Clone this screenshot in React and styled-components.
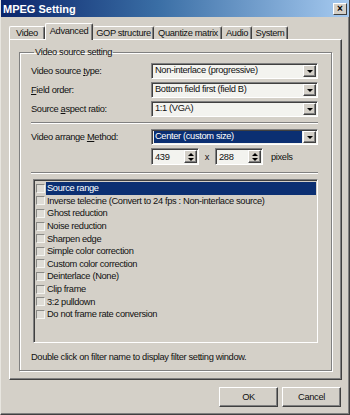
import styled, { createGlobalStyle } from "styled-components";

const GlobalStyle = createGlobalStyle`
  html, body {
    margin: 0;
    padding: 0;
    background: #d4d0c8;
  }
  body {
    font-family: "Liberation Sans", Arial, sans-serif;
  }
`;

const Window = styled.div`
  width: 350px;
  height: 415px;
  box-sizing: border-box;
  background: #d4d0c8;
  border-left: 1px solid #e8e6e0;
  border-right: 1px solid #404040;
  border-bottom: 1px solid #404040;
  box-shadow: inset -1px -1px #808080;
  display: flex;
  flex-direction: column;
  font-size: 9.3px;
  letter-spacing: -0.35px;
  color: #111;
`;

const TitleBar = styled.div`
  height: 17px;
  flex-shrink: 0;
  display: flex;
  align-items: center;
  justify-content: space-between;
  padding: 0 2px 0 2px;
  background: linear-gradient(to right, #0a246a, #3a6ea5 45%, #a6caf0);
  color: #fff;
  font-weight: bold;
  font-size: 11px;
  letter-spacing: 0;
`;

const CloseButton = styled.div`
  width: 14px;
  height: 12px;
  box-sizing: border-box;
  background: #d4d0c8;
  border-top: 1px solid #fff;
  border-left: 1px solid #fff;
  border-right: 1px solid #404040;
  border-bottom: 1px solid #404040;
  color: #000;
  font-size: 10px;
  line-height: 10px;
  text-align: center;
  font-weight: bold;
`;

const Body = styled.div`
  padding: 6px 0 0 8px;
  display: flex;
  flex-direction: column;
`;

const TabStrip = styled.div`
  display: flex;
  align-items: flex-end;
  height: 16px;
  position: relative;
  z-index: 1;
`;

const Tab = styled.div`
  width: ${(p) => p.$w}px;
  height: ${(p) => (p.$active ? 17 : 13)}px;
  margin-bottom: ${(p) => (p.$active ? -1 : 0)}px;
  box-sizing: border-box;
  background: #d4d0c8;
  border-top: 1px solid #fff;
  border-left: 1px solid ${(p) => (p.$first || p.$active ? "#fff" : "transparent")};
  border-right: 1px solid #404040;
  box-shadow: inset -1px 0 #808080;
  border-radius: 2px 2px 0 0;
  display: flex;
  justify-content: center;
  align-items: ${(p) => (p.$active ? "flex-start" : "center")};
  padding-top: ${(p) => (p.$active ? 2 : 0)}px;
  white-space: nowrap;
`;

const Panel = styled.div`
  width: 333px;
  height: 341px;
  box-sizing: border-box;
  border-top: 1px solid #fff;
  border-left: 1px solid #fff;
  border-right: 1px solid #404040;
  border-bottom: 1px solid #404040;
  box-shadow: inset -1px -1px #808080;
  padding: 0 9px;
`;

const Group = styled.fieldset`
  margin: 7px 0 0 0;
  width: 313px;
  height: 324px;
  box-sizing: border-box;
  border: 1px solid #808080;
  box-shadow: 1px 1px 0 #fff, inset 1px 1px 0 #fff;
  padding: 5px 13px 0 11px;
  display: flex;
  flex-direction: column;
`;

const Legend = styled.legend`
  padding: 0 1px;
  margin-left: 3px;
  line-height: 11px;
`;

const Row = styled.div`
  display: flex;
  align-items: center;
  height: ${(p) => p.$h || 16}px;
  margin-top: ${(p) => p.$mt || 0}px;
`;

const Label = styled.div`
  width: 120px;
  flex-shrink: 0;
  white-space: nowrap;

  u {
    text-decoration: underline;
  }
`;

const Combo = styled.div`
  width: 167px;
  height: 16px;
  box-sizing: border-box;
  border-top: 1px solid #808080;
  border-left: 1px solid #808080;
  border-right: 1px solid #fff;
  border-bottom: 1px solid #fff;
  box-shadow: inset 1px 1px #404040;
  background: #f3f3ef;
  display: flex;
  padding: 2px 1px 1px 2px;
`;

const ComboText = styled.div`
  flex: 1;
  padding-left: 1px;
  line-height: 11px;
  white-space: nowrap;
  background: ${(p) => (p.$selected ? "#0b2f72" : "transparent")};
  color: ${(p) => (p.$selected ? "#fff" : "#111")};
  margin-right: 1px;
  margin-top: -1px;
`;

const ArrowButton = styled.div`
  width: 13px;
  margin-top: -1px;
  box-sizing: border-box;
  background: #d4d0c8;
  border-top: 1px solid #fff;
  border-left: 1px solid #fff;
  border-right: 1px solid #404040;
  border-bottom: 1px solid #404040;
  box-shadow: inset -1px -1px #808080;
  display: flex;
  flex-direction: column;
  align-items: center;
  justify-content: center;
  gap: 2px;
`;

const Triangle = styled.div`
  width: 0;
  height: 0;
  border-left: 3px solid transparent;
  border-right: 3px solid transparent;
  ${(p) => (p.$up ? "border-bottom: 3px solid #000;" : "border-top: 3px solid #000;")}
`;

const Spin = styled.div`
  width: 48px;
  height: 17px;
  box-sizing: border-box;
  border-top: 1px solid #808080;
  border-left: 1px solid #808080;
  border-right: 1px solid #fff;
  border-bottom: 1px solid #fff;
  box-shadow: inset 1px 1px #404040;
  background: #f3f3ef;
  display: flex;
  padding: 2px 1px 1px 2px;
`;

const SpinText = styled.div`
  flex: 1;
  line-height: 12px;
  padding-left: 1px;
`;

const Times = styled.div`
  width: 16px;
  text-align: center;
`;

const Unit = styled.div`
  margin-left: 8px;
`;

const Separator = styled.div`
  width: 287px;
  height: 0;
  border-top: 1px solid #808080;
  border-bottom: 1px solid #fff;
  margin-top: ${(p) => p.$mt}px;
`;

const FilterList = styled.div`
  width: 285px;
  height: 164px;
  margin: 5px 0 0 2px;
  box-sizing: border-box;
  border-top: 1px solid #808080;
  border-left: 1px solid #808080;
  border-right: 1px solid #fff;
  border-bottom: 1px solid #fff;
  box-shadow: inset 1px 1px #404040;
  padding: 2px 1px 0 2px;
`;

const FilterItem = styled.div`
  height: 12.6px;
  display: flex;
  align-items: center;
`;

const CheckBox = styled.div`
  width: 9px;
  height: 9px;
  box-sizing: border-box;
  flex-shrink: 0;
  border-top: 1px solid #8a8a86;
  border-left: 1px solid #8a8a86;
  border-right: 1px solid #f4f4f0;
  border-bottom: 1px solid #f4f4f0;
  background: #dedcd6;
  margin-right: 1px;
`;

const FilterName = styled.div`
  flex: 1;
  height: 100%;
  display: flex;
  align-items: center;
  padding-left: 1px;
  white-space: nowrap;
  background: ${(p) => (p.$selected ? "#0b2f72" : "transparent")};
  color: ${(p) => (p.$selected ? "#fff" : "#111")};
`;

const Hint = styled.div`
  margin-top: 9px;
  line-height: 11px;
`;

const ButtonBar = styled.div`
  display: flex;
  justify-content: flex-end;
  gap: 4px;
  padding: 7px 8px 0 0;
`;

const Button = styled.div`
  width: 59px;
  height: 20px;
  box-sizing: border-box;
  border-top: 1px solid #fff;
  border-left: 1px solid #fff;
  border-right: 1px solid #404040;
  border-bottom: 1px solid #404040;
  box-shadow: inset -1px -1px #808080;
  display: flex;
  align-items: center;
  justify-content: center;
`;

const tabs = [
  { name: "Video", w: 36 },
  { name: "Advanced", w: 48, active: true },
  { name: "GOP structure", w: 61 },
  { name: "Quantize matrix", w: 68 },
  { name: "Audio", w: 30 },
  { name: "System", w: 36 },
];

const filters = [
  "Source range",
  "Inverse telecine (Convert to 24 fps : Non-interlace source)",
  "Ghost reduction",
  "Noise reduction",
  "Sharpen edge",
  "Simple color correction",
  "Custom color correction",
  "Deinterlace (None)",
  "Clip frame",
  "3:2 pulldown",
  "Do not frame rate conversion",
];

const ComboBox = ({ value, selected }) => (
  <Combo>
    <ComboText $selected={selected}>{value}</ComboText>
    <ArrowButton>
      <Triangle />
    </ArrowButton>
  </Combo>
);

const SpinBox = ({ value }) => (
  <Spin>
    <SpinText>{value}</SpinText>
    <ArrowButton>
      <Triangle $up />
      <Triangle />
    </ArrowButton>
  </Spin>
);

export default function App() {
  return (
    <>
      <GlobalStyle />
      <Window>
        <TitleBar>
          <span>MPEG Setting</span>
          <CloseButton>×</CloseButton>
        </TitleBar>
        <Body>
          <TabStrip>
            {tabs.map((t, i) => (
              <Tab key={t.name} $w={t.w} $active={t.active} $first={i === 0}>
                {t.name}
              </Tab>
            ))}
          </TabStrip>
          <Panel>
            <Group>
              <Legend>Video source setting</Legend>
              <Row>
                <Label>
                  Video source <u>t</u>ype:
                </Label>
                <ComboBox value="Non-interlace (progressive)" />
              </Row>
              <Row $mt={3}>
                <Label>
                  <u>F</u>ield order:
                </Label>
                <ComboBox value="Bottom field first (field B)" />
              </Row>
              <Row $mt={3}>
                <Label>
                  Source <u>a</u>spect ratio:
                </Label>
                <ComboBox value="1:1 (VGA)" />
              </Row>
              <Separator $mt={5} />
              <Row $mt={5}>
                <Label>
                  Video arrange <u>M</u>ethod:
                </Label>
                <ComboBox value="Center (custom size)" selected />
              </Row>
              <Row $mt={3} $h={17}>
                <Label />
                <SpinBox value="439" />
                <Times>x</Times>
                <SpinBox value="288" />
                <Unit>pixels</Unit>
              </Row>
              <Separator $mt={7} />
              <FilterList>
                {filters.map((f, i) => (
                  <FilterItem key={f}>
                    <CheckBox />
                    <FilterName $selected={i === 0}>{f}</FilterName>
                  </FilterItem>
                ))}
              </FilterList>
              <Hint>Double click on filter name to display filter setting window.</Hint>
            </Group>
          </Panel>
          <ButtonBar>
            <Button>OK</Button>
            <Button>Cancel</Button>
          </ButtonBar>
        </Body>
      </Window>
    </>
  );
}
